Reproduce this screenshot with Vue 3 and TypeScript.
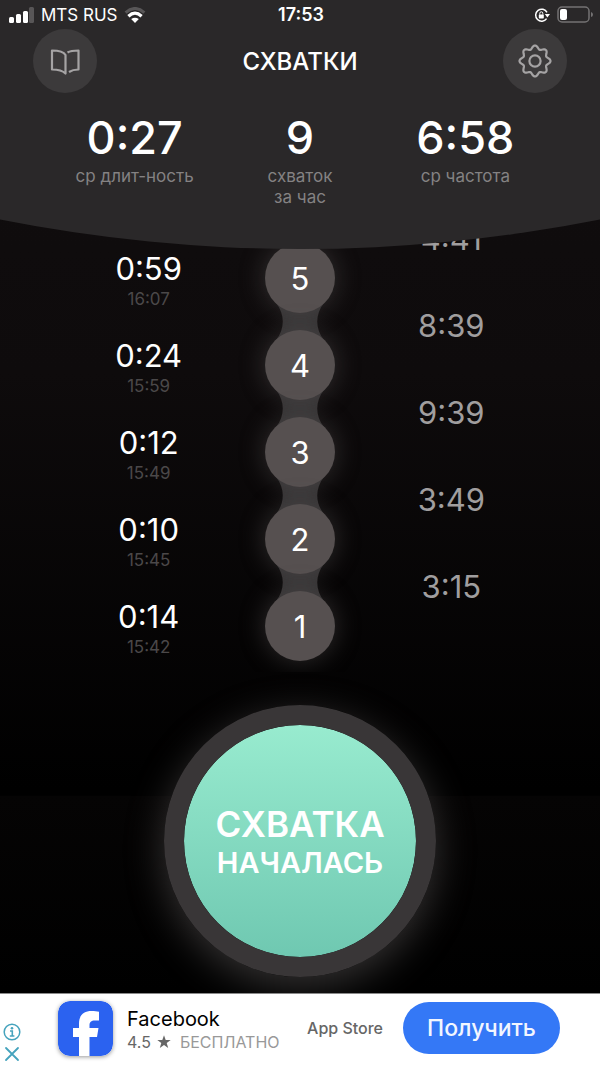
<script setup lang="ts">
interface Contraction {
  id: number
  duration: string
  startedAt: string
  interval: string
}

interface Stat {
  value: string
  label: string[]
}

const stats: Stat[] = [
  { value: '0:27', label: ['ср длит-ность'] },
  { value: '9', label: ['схваток', 'за час'] },
  { value: '6:58', label: ['ср частота'] },
]

const contractions: Contraction[] = [
  { id: 5, duration: '0:59', startedAt: '16:07', interval: '4:41' },
  { id: 4, duration: '0:24', startedAt: '15:59', interval: '8:39' },
  { id: 3, duration: '0:12', startedAt: '15:49', interval: '9:39' },
  { id: 2, duration: '0:10', startedAt: '15:45', interval: '3:49' },
  { id: 1, duration: '0:14', startedAt: '15:42', interval: '3:15' },
]

// Outline of the eight-lobed gear, traced as a wave around a circle.
function gearOutline(teeth: number, radius: number, depth: number): string {
  const steps = teeth * 16
  const points: string[] = []
  for (let i = 0; i < steps; i++) {
    const a = (i / steps) * Math.PI * 2
    const r = radius + depth * Math.cos(teeth * a)
    points.push(`${(20 + r * Math.cos(a)).toFixed(2)} ${(20 + r * Math.sin(a)).toFixed(2)}`)
  }
  return `M${points.join('L')}Z`
}

const gearPath = gearOutline(8, 13.8, 1.7)
</script>

<template>
  <div class="screen">
    <header class="top">
      <div class="status">
        <div class="carrier">
          <svg class="signal" width="26" height="16" viewBox="0 0 26 16" aria-hidden="true">
            <rect x="0" y="10" width="5" height="6" rx="1.5" fill="#fff" />
            <rect x="7" y="7" width="5" height="9" rx="1.5" fill="#fff" />
            <rect x="14" y="4" width="5" height="12" rx="1.5" fill="#fff" />
            <rect x="20" y="0" width="5" height="16" rx="1.5" fill="#585657" />
          </svg>
          <span>MTS RUS</span>
          <svg width="22" height="16" viewBox="0 0 22 16" aria-hidden="true">
            <path d="M1.6 5.6Q11-2.6 20.4 5.6" fill="none" stroke="#585657" stroke-width="3" />
            <path d="M4.4 9.2Q11 3.2 17.6 9.2" fill="none" stroke="#fff" stroke-width="3.2" />
            <path d="M11 16L7.2 12.1Q11 9.2 14.8 12.1Z" fill="#fff" />
          </svg>
        </div>
        <time class="clock">17:53</time>
        <div class="power">
          <svg width="16" height="16" viewBox="0 0 16 16" aria-hidden="true">
            <path d="M12.6 11.6A6 6 0 1 1 13 5.4" fill="none" stroke="#fff" stroke-width="1.500" />
            <path d="M10.8 7H16L13.400 10.600Z" fill="#fff" />
            <rect x="4.800" y="7.400" width="5" height="4" rx="0.600" fill="#fff" />
            <path d="M5.800 7.600V6.300a1.500 1.500 0 0 1 3 0V7.600" fill="none" stroke="#fff" stroke-width="1" />
          </svg>
          <svg width="36" height="18" viewBox="0 0 36 18" aria-hidden="true">
            <rect x="1" y="1" width="31" height="15" rx="4" fill="none" stroke="#747273" stroke-width="1.500" />
            <rect x="3" y="3" width="7" height="11" rx="2" fill="#fff" />
            <path d="M34 6Q36 6.500 36 8.500T34 11Z" fill="#747273" />
          </svg>
        </div>
      </div>

      <div class="toolbar">
        <button class="round" type="button" aria-label="Журнал">
          <svg width="40" height="40" viewBox="0 0 40 40" fill="none" stroke="#a5a3a4" stroke-width="2.200" stroke-linejoin="round" aria-hidden="true">
            <path d="M20.500 32.500V14C18.500 10.500 14 9.500 7 9.500V28.500C13 28.500 17.500 29.500 20.500 32.500Z" />
            <path d="M22.500 11.500C25 10 28 9.500 33.500 9.500V28.500C29.500 28.500 27 29 24 31" />
          </svg>
        </button>
        <h1>СХВАТКИ</h1>
        <button class="round" type="button" aria-label="Настройки">
          <svg width="40" height="40" viewBox="0 0 40 40" fill="none" stroke="#a5a3a4" stroke-width="2.200" stroke-linejoin="round" aria-hidden="true">
            <path :d="gearPath" />
            <circle cx="20" cy="20" r="5.600" />
          </svg>
        </button>
      </div>

      <div class="stats">
        <div v-for="stat in stats" :key="stat.value" class="stat">
          <strong>{{ stat.value }}</strong>
          <span v-for="line in stat.label" :key="line">{{ line }}</span>
        </div>
      </div>
    </header>

    <ol class="history">
      <li v-for="(item, index) in contractions" :key="item.id" class="row">
        <div class="length">
          <span class="duration">{{ item.duration }}</span>
          <time class="started">{{ item.startedAt }}</time>
        </div>
        <div class="node">
          <span class="ball">{{ item.id }}</span>
          <svg v-if="index < contractions.length - 1" class="link" width="50" height="37" viewBox="0 0 50 37" aria-hidden="true">
            <path d="M1 0C10 11 10 26 1 37H49C40 26 40 11 49 0Z" fill="#343233" />
          </svg>
        </div>
        <span class="interval">{{ item.interval }}</span>
      </li>
    </ol>

    <main class="action">
      <button class="start" type="button">
        <span class="start-main">СХВАТКА</span>
        <span class="start-sub">НАЧАЛАСЬ</span>
      </button>
    </main>

    <aside class="ad">
      <div class="choices">
        <button type="button" aria-label="Об этой рекламе">
          <svg width="18" height="18" viewBox="0 0 18 18" aria-hidden="true">
            <circle cx="9" cy="9" r="7.800" fill="none" stroke="#45a3bd" stroke-width="1.500" />
            <circle cx="9" cy="5.200" r="1.300" fill="#45a3bd" />
            <path d="M7 8H9.300V13M6.800 13H11.400" fill="none" stroke="#45a3bd" stroke-width="1.600" />
          </svg>
        </button>
        <button type="button" aria-label="Закрыть рекламу">
          <svg width="18" height="18" viewBox="0 0 18 18" aria-hidden="true">
            <path d="M3 3L15 15M15 3L3 15" stroke="#45a3bd" stroke-width="1.800" stroke-linecap="round" />
          </svg>
        </button>
      </div>
      <svg class="logo" width="55" height="55" viewBox="0 0 55 55" aria-hidden="true">
        <rect width="55" height="55" rx="12" fill="#2b62f0" />
        <path d="M21 55V36H15V27H21V23C21 14 25.500 10 33.500 10C36.500 10 39 10.300 41 10.800V19.500H37C33 19.500 31.500 21 31.500 24.500V27H40.500L39 36H31.500V55Z" fill="#fff" />
      </svg>
      <div class="app">
        <span class="app-name">Facebook</span>
        <span class="app-meta">
          <span>4.5</span>
          <svg width="14" height="14" viewBox="0 0 14 14" aria-hidden="true">
            <path d="M7 0.300L8.700 5H13.700L9.700 8L11.200 13L7 10L2.800 13L4.300 8L0.300 5H5.300Z" fill="#666" />
          </svg>
          <span class="free">БЕСПЛАТНО</span>
        </span>
      </div>
      <span class="store">App Store</span>
      <button class="get" type="button">Получить</button>
    </aside>
  </div>
</template>

<style>
body {
  margin: 0;
  background: #000;
}
</style>

<style scoped>
.screen {
  display: flex;
  flex-direction: column;
  min-height: 100vh;
  color: #fff;
  font-family: Inter, "Noto Sans", sans-serif;
  background: linear-gradient(#110e0f 0%, #0e0b0c 35%, #000 74%, #000 74.6%, #050404 74.7%, #000 93%);
}

button {
  padding: 0;
  border: 0;
  color: inherit;
  font-family: inherit;
  background: none;
  cursor: pointer;
}

svg {
  display: block;
}

.top {
  position: relative;
  z-index: 1;
  box-sizing: border-box;
  height: 249px;
  background: #2a2829;
  clip-path: circle(1540px at 50% calc(100% - 1540px));
}

.status {
  display: grid;
  grid-template-columns: 1fr auto 1fr;
  align-items: center;
  height: 29px;
  padding: 0 7px 0 9px;
  font-size: 17px;
}

.carrier {
  display: flex;
  align-items: center;
  gap: 6px;
}

.clock {
  font-size: 18px;
  font-weight: 600;
}

.power {
  display: flex;
  align-items: center;
  justify-content: flex-end;
  gap: 7px;
}

.toolbar {
  display: flex;
  align-items: center;
  justify-content: space-between;
  padding: 0 33px;
}

.round {
  display: flex;
  align-items: center;
  justify-content: center;
  width: 64px;
  height: 64px;
  border-radius: 50%;
  background: #3c3a3b;
}

h1 {
  margin: 0;
  font-size: 24px;
  font-weight: 500;
}

.stats {
  display: grid;
  grid-template-columns: repeat(3, 1fr);
  padding: 20px 52px 0;
}

.stat {
  display: flex;
  flex-direction: column;
  align-items: center;
  color: #848283;
  font-size: 17px;
  line-height: 21px;
}

.stat strong {
  margin-bottom: 3px;
  color: #fff;
  font-size: 45px;
  font-weight: 500;
  line-height: 50px;
}

.history {
  position: relative;
  z-index: 0;
  overflow: hidden;
  margin: -30px 0 0;
  padding: 15px 73px 3px;
  list-style: none;
}

.row {
  display: grid;
  grid-template-columns: repeat(3, 1fr);
  align-items: start;
  height: 87px;
}

.length {
  display: flex;
  flex-direction: column;
  align-items: center;
  gap: 2px;
  padding-top: 17px;
}

.duration {
  font-size: 31px;
  line-height: 36px;
}

.started {
  color: #4b4849;
  font-size: 17px;
  line-height: 20px;
}

.node {
  position: relative;
  justify-self: center;
  padding-top: 9px;
}

.ball {
  display: flex;
  align-items: center;
  justify-content: center;
  width: 70px;
  height: 70px;
  border-radius: 50%;
  font-size: 31px;
  background: #565050;
  box-shadow: 0 0 26px rgba(110, 104, 104, 0.4);
}

.link {
  position: absolute;
  z-index: -1;
  top: 69px;
  left: 10px;
}

.interval {
  justify-self: center;
  margin-top: -13px;
  color: #a09e9f;
  font-size: 31px;
  line-height: 36px;
}

.action {
  display: flex;
  flex: 1;
  align-items: flex-start;
  justify-content: center;
  padding: 33px 0 17px;
}

.start {
  display: flex;
  flex-direction: column;
  align-items: center;
  justify-content: center;
  width: 272px;
  height: 272px;
  padding-top: 2px;
  border: 20px solid #393637;
  border-radius: 50%;
  font-weight: 600;
  background: linear-gradient(#98ebcf, #6fc8b1) padding-box;
  box-shadow: 0 10px 38px rgba(130, 125, 125, 0.4);
}

.start-main {
  font-size: 35px;
  line-height: 42px;
}

.start-sub {
  font-size: 29px;
  line-height: 36px;
}

.ad {
  position: relative;
  display: flex;
  align-items: center;
  box-sizing: border-box;
  height: 73px;
  margin-top: -1px;
  padding: 0 40px 4px 3px;
  border-top: 1px solid #8a8a8a;
  color: #666;
  background: #fff;
}

.choices {
  display: flex;
  flex-direction: column;
  gap: 4px;
  padding-top: 30px;
}

.logo {
  margin-left: 37px;
  border-radius: 12px;
  box-shadow: 0 1px 4px rgba(0, 0, 0, 0.4);
}

.app {
  display: flex;
  flex-direction: column;
  margin-left: 14px;
  padding-top: 3px;
}

.app-name {
  color: #000;
  font-size: 20px;
  line-height: 24px;
}

.app-meta {
  display: flex;
  align-items: center;
  gap: 6px;
  font-size: 16px;
  line-height: 22px;
}

.free {
  margin-left: 3px;
  color: #999;
}

.store {
  margin-left: auto;
  font-size: 16px;
  font-weight: 500;
}

.get {
  width: 157px;
  height: 52px;
  margin-left: 20px;
  border-radius: 26px;
  color: #f2f6ff;
  font-size: 23px;
  font-weight: 500;
  background: #3478f6;
}
</style>
